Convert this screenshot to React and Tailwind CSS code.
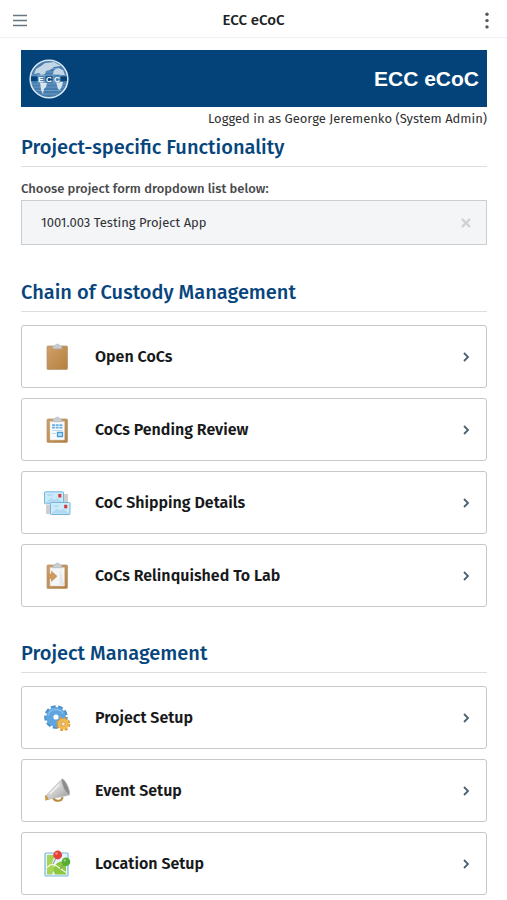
import React, { useState } from "react";

function Clipboard({ children }) {
  return (
    <svg viewBox="0 0 28 28" className="h-7 w-7">
      <defs>
        <linearGradient id="board" x1="0" y1="0" x2="1" y2="1">
          <stop offset="0" stopColor="#cfa069" />
          <stop offset="1" stopColor="#b5803f" />
        </linearGradient>
      </defs>
      <rect x="4" y="3" width="20.5" height="23.5" rx="1" fill="url(#board)" stroke="#b3946c" strokeWidth="0.7" />
      {children}
      <path d="M10 5.8V3.6q0-.8.8-.8h1.2Q12.4 1 14.4 1T16.8 2.8H18q.8 0 .8.8v2.2z" fill="#c9cdd4" stroke="#b0b4bc" strokeWidth="0.5" />
    </svg>
  );
}

const OpenIcon = () => <Clipboard />;

const ReviewIcon = () => (
  <Clipboard>
    <path d="M7 5.5h14.5v18.5H7z" fill="#f8fafc" stroke="#d6d2cc" strokeWidth="0.5" />
    <path d="M9 9.2h10.5M9 11.6h10.5" stroke="#6ab0e0" strokeWidth="1.8" strokeDasharray="3 .7" />
    <path d="M9 14.5h10.5M9 17.5h4" stroke="#c3dae9" strokeWidth="1" />
    <path d="M14.5 16.5h5v4h-5z" fill="#c4e3f7" stroke="#469edb" strokeWidth="1.3" />
  </Clipboard>
);

const RelinquishIcon = () => (
  <Clipboard>
    <path d="M7 5.5h14.5v18.5H7z" fill="#f5f6f8" stroke="#d6d2cc" strokeWidth="0.5" />
    <path d="M17 7l4.5 16h-5z" fill="#e4e6ea" />
    <path d="M5 12.3h3.5v-3l5.5 5-5.5 5v-3H5z" fill="#cf9a60" stroke="#ba8449" strokeWidth="0.6" />
  </Clipboard>
);

const ShippingIcon = () => (
  <svg viewBox="0 0 28 28" className="h-7 w-7">
    <path d="M20 5h5v8h-5zM3 16h6v9H3z" fill="#cfcfd1" />
    <rect x="1.5" y="2.8" width="19" height="12" rx="0.8" fill="#c9eafb" stroke="#76b5dc" />
    <path d="M2.5 14 8 9.5l3.5 1.8 3-1.8 5 4.5" fill="#b3daf0" stroke="#a2cfe8" strokeWidth="0.5" />
    <rect x="15.3" y="5" width="3" height="3.5" fill="#d9343b" />
    <rect x="7.5" y="13.5" width="19.5" height="12" rx="0.8" fill="#cdecfb" stroke="#76b5dc" />
    <path d="M8.5 24.7 14 20.3l3.5 1.5 3-1.5 5.5 4.4" fill="#b3daf0" stroke="#a2cfe8" strokeWidth="0.5" />
    <rect x="21.2" y="15.8" width="3" height="3.5" fill="#d9343b" />
    <path d="M4.5 6h5M10.5 17h5" stroke="#95c7e4" strokeWidth="0.8" />
  </svg>
);

const GearsIcon = () => (
  <svg viewBox="0 0 28 28" className="h-7 w-7">
    <circle cx="13" cy="13" r="9.4" fill="none" stroke="#4f90cb" strokeWidth="4.8" strokeDasharray="4.4 2.16" />
    <circle cx="13" cy="13" r="6.3" fill="none" stroke="#5fa5df" strokeWidth="7.4" />
    <path d="M5 11.5a8.2 8.2 0 0 1 15-2" fill="none" stroke="#82bdec" strokeWidth="1.5" />
    <circle cx="20.2" cy="20" r="5.6" fill="none" stroke="#dc9a38" strokeWidth="3" strokeDasharray="2.6 1.8" />
    <circle cx="20.2" cy="20" r="3.8" fill="none" stroke="#f2b84e" strokeWidth="3.6" />
    <circle cx="20.2" cy="20" r="1.9" fill="#fbe9cc" stroke="#cc8b30" strokeWidth="0.6" />
  </svg>
);

const MegaphoneIcon = () => (
  <svg viewBox="0 0 28 28" className="h-7 w-7">
    <defs>
      <linearGradient id="horn" x1="0" y1="0" x2="1" y2="1">
        <stop offset="0" stopColor="#e8e8e8" />
        <stop offset=".5" stopColor="#cfcfcf" />
        <stop offset="1" stopColor="#969696" />
      </linearGradient>
    </defs>
    <path d="M10 20.5q1.5 3.5 5 3.3 4 0 4.5-4" fill="none" stroke="#b78b42" strokeWidth="2" />
    <path d="M3 18.5 18.5 2.3Q25 7 26.4 18L5 22.5z" fill="url(#horn)" stroke="#b2b2b2" strokeWidth="0.5" />
    <path d="M18.5 2.3q1.6-1.4 5 4.2 3.8 7 3 11.5-3.2-1.2-5.7-6.5-2.5-6-2.3-9.2z" fill="#8a8a8a" stroke="#c2c2c2" strokeWidth="0.7" />
    <path d="m7 16.8 9.5-9.3" stroke="#f8f8f8" strokeWidth="1.2" />
    <path d="m3.2 17.8 2.6 4.6-3.2 1.3-.8-4.4z" fill="#c99b42" />
  </svg>
);

const MapIcon = () => (
  <svg viewBox="0 0 28 28" className="h-7 w-7">
    <rect x="2" y="3" width="23" height="23" rx="1" fill="#e6f5fb" stroke="#78b8dc" strokeWidth="1.2" />
    <path d="M4 5h8l-3 8 3 5-3 6.5H4z" fill="#a8d455" />
    <path d="M13 14q5-5 10 0v10.5H12l-2-5z" fill="#8dc63f" />
    <path d="M4 17.5q5-5 9-2t10 7" fill="none" stroke="#f4f8dc" strokeWidth="1.1" />
    <path d="m14 6-4 8M21 14l-4 5" stroke="#858585" strokeWidth="0.9" />
    <circle cx="14.7" cy="5" r="4.4" fill="#e5423b" />
    <circle cx="13.5" cy="3.6" r="1.3" fill="#f58b80" />
    <circle cx="23" cy="11.8" r="4.3" fill="#55ad35" />
    <circle cx="21.8" cy="10.4" r="1.2" fill="#99d478" />
  </svg>
);

function Logo() {
  return (
    <svg viewBox="0 0 40 40" className="h-10 w-10">
      <circle cx="20" cy="20" r="18.8" fill="#447dae" stroke="#dbe6f0" strokeWidth="1.6" />
      <path d="M5 13h30M3 16h34M3 25h34M5 28h30M8 31.5h24M12 35h16M9 9.5h22" stroke="#7ea7ca" strokeWidth="0.7" />
      <path d="M5 15l2-5 5-3 4-3 9-1 7 4-7 1-4 3-4 1-1 3-4 1-2-2zM24 15l1-4 4-2 5 2 2 5H25z" fill="#c3d6e6" />
      <path d="M11 23l7 1-1 4-2 2-1 5-2-4zM27 23h7l-1 4-2 4-2-1z" fill="#d8e4ee" />
      <path d="M2 17.5h36v4.6H2z" fill="#03437a" />
      <path d="M9 16.4h7v6.8H9zM24 15.5h7v7.7h-7z" fill="#4d83b2" stroke="#9cbcd6" strokeWidth="0.6" />
      <text x="20" y="22.6" textAnchor="middle" fill="#fff" fontSize="8" fontWeight="700" fontFamily="Liberation Sans, Arial, sans-serif">E C C</text>
    </svg>
  );
}

function Chevron() {
  return (
    <svg viewBox="0 0 10 10" className="h-[10px] w-[10px]" fill="none" stroke="#4c6070" strokeWidth="1.8">
      <path d="m3 1 4 4-4 4" />
    </svg>
  );
}

function Section({ title, children }) {
  return (
    <section>
      <h2 className="border-b border-[#dcdfe1] pb-[6px] text-[20px] leading-[26px] font-medium text-[#07457d]">{title}</h2>
      {children}
    </section>
  );
}

function MenuList({ items }) {
  return (
    <ul className="mt-[13px] space-y-[10px]">
      {items.map(({ label, Icon }) => (
        <li key={label}>
          <a href="#" className="flex h-[63px] items-center rounded-[3px] border border-[#c3c8cb] bg-white px-[15px] text-[16px] font-semibold text-[#17191b]">
            <span className="ml-[6px]">
              <Icon />
            </span>
            <span className="ml-6 flex-1">{label}</span>
            <Chevron />
          </a>
        </li>
      ))}
    </ul>
  );
}

const custody = [
  { label: "Open CoCs", Icon: OpenIcon },
  { label: "CoCs Pending Review", Icon: ReviewIcon },
  { label: "CoC Shipping Details", Icon: ShippingIcon },
  { label: "CoCs Relinquished To Lab", Icon: RelinquishIcon },
];

const management = [
  { label: "Project Setup", Icon: GearsIcon },
  { label: "Event Setup", Icon: MegaphoneIcon },
  { label: "Location Setup", Icon: MapIcon },
];

export default function App() {
  const [project, setProject] = useState("1001.003");
  return (
    <div className="min-h-screen bg-white font-['Fira_Sans','Noto_Sans',sans-serif] text-[#303234]">
      <header className="flex h-[38px] items-center justify-between border-b border-[#f0f1f2] px-3 pt-1">
        <button type="button" aria-label="Menu" className="flex h-5 w-4 items-center justify-center">
          <svg viewBox="0 0 14 14" className="h-[14px] w-[14px]" stroke="#667784" strokeWidth="1.6">
            <path d="M0 1.5h14M0 6.5h14M0 11.5h14" />
          </svg>
        </button>
        <h1 className="text-[15px] font-medium text-[#202224]">ECC eCoC</h1>
        <button type="button" aria-label="More options" className="flex h-5 w-4 items-center justify-center">
          <svg viewBox="0 0 4 18" className="h-[18px] w-1" fill="#54585b">
            <circle cx="2" cy="2.3" r="1.7" />
            <circle cx="2" cy="8.6" r="1.7" />
            <circle cx="2" cy="14.9" r="1.7" />
          </svg>
        </button>
      </header>
      <main className="pt-3 pr-5 pb-1 pl-[21px]">
        <div className="flex h-[57px] items-center justify-between bg-[#03437a] px-2">
          <Logo />
          <span className="font-['Liberation_Sans',Arial,sans-serif] text-[21px] font-bold text-white">ECC eCoC</span>
        </div>
        <p className="mt-[3px] text-right text-[13px] leading-[18px]">Logged in as George Jeremenko (System Admin)</p>
        <div className="mt-[6px] flex flex-col gap-[33px]">
          <Section title="Project-specific Functionality">
            <label htmlFor="project" className="mt-3 block text-[13px] leading-5 font-medium text-[#48494b]">
              Choose project form dropdown list below:
            </label>
            <div className="mt-[1px] mb-[1px] flex h-[45px] items-center border border-[#c9ced1] bg-[#f3f5f7] px-[15px]">
              <select id="project" value={project} onChange={e => setProject(e.target.value)} className="h-full flex-1 appearance-none pl-1 text-[13px] outline-none">
                <option value=""></option>
                <option value="1001.003">1001.003 Testing Project App</option>
              </select>
              <button type="button" aria-label="Clear project" onClick={() => setProject("")}>
                <svg viewBox="0 0 10 10" className="h-[10px] w-[10px]" stroke="#ced1d4" strokeWidth="2.4">
                  <path d="m1 1 8 8M9 1 1 9" />
                </svg>
              </button>
            </div>
          </Section>
          <Section title="Chain of Custody Management">
            <MenuList items={custody} />
          </Section>
          <Section title="Project Management">
            <MenuList items={management} />
          </Section>
        </div>
      </main>
    </div>
  );
}
